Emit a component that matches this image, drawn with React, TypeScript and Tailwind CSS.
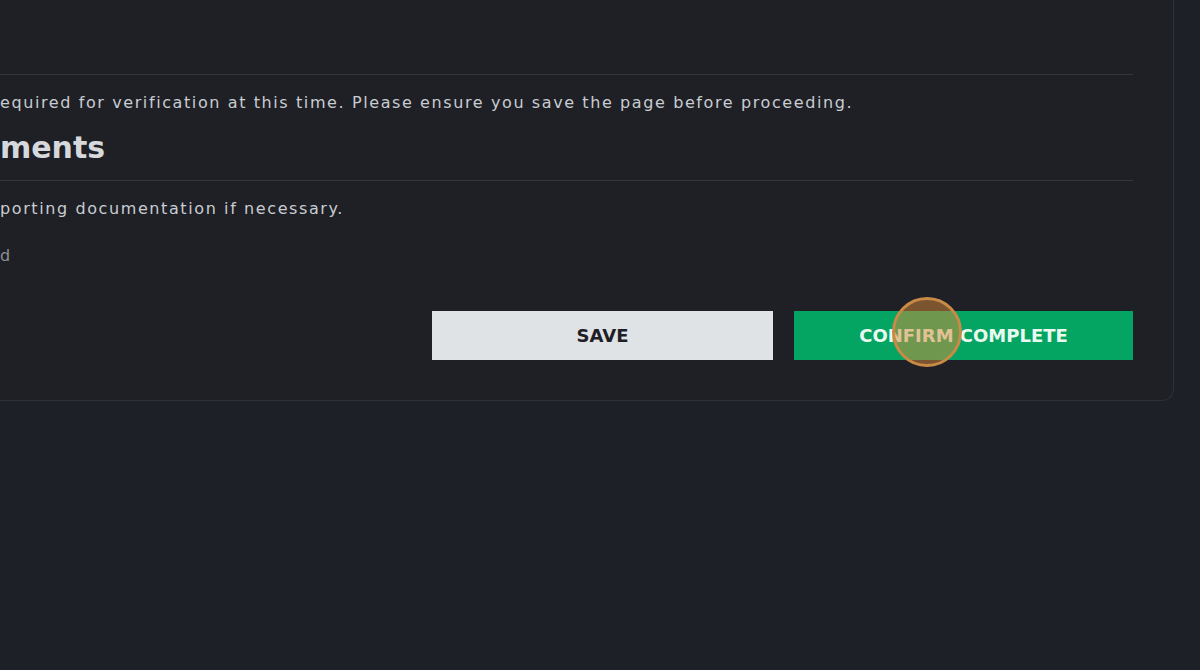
import React from "react";

export default function App() {
  const font = { fontFamily: '"DejaVu Sans", "Liberation Sans", sans-serif' };
  return (
    <div className="h-[670px] w-[1200px] overflow-hidden bg-[#1d2027]" style={font}>
      <div className="relative w-[1174px] rounded-br-[12px] border-r border-b border-[#2e3138] bg-[#1e2026] pr-10 pb-10 pt-[74px]">
        <div className="border-t border-[#33363d] pt-[16px]">
          <p className="whitespace-nowrap text-[16px] leading-[24px] tracking-[1.6px] text-[#c9ccd1]">
            equired for verification at this time. Please ensure you save the page before proceeding.
          </p>
          <h2 className="mt-[15px] text-[30px] font-bold leading-[36px] text-[#d6d8dc]">ments</h2>
        </div>
        <div className="mt-[14px] border-t border-[#33363d] pt-[16px]">
          <p className="text-[16px] leading-[24px] tracking-[1.6px] text-[#c9ccd1]">
            porting documentation if necessary.
          </p>
          <p className="mt-[23px] text-[16px] leading-[24px] tracking-[1.6px] text-[#8b8f96]">d</p>
        </div>
        <div className="mt-[43px] flex justify-end gap-[21px]">
          <button className="h-[49px] w-[341px] bg-[#e0e3e6] text-[18px] font-bold text-[#1e2026]">
            SAVE
          </button>
          <button className="h-[49px] w-[339px] bg-[#04a462] text-[18px] font-bold text-[#eafaf0]">
            CONFIRM COMPLETE
          </button>
        </div>
        <div className="pointer-events-none absolute left-[892px] top-[297px] h-[70px] w-[70px] rounded-full border-[3px] border-[#c98a45] bg-[rgba(217,138,58,0.5)]" />
      </div>
    </div>
  );
}
